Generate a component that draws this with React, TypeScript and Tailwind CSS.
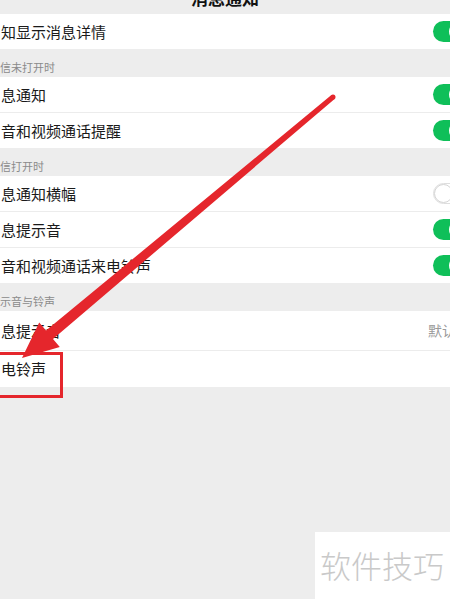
const font = { fontFamily: '"Noto Sans CJK SC", "Noto Sans", sans-serif' };

type Row = { label: string; toggle?: boolean; value?: string; h?: string };

const groups: { title?: string; rows: Row[] }[] = [
  { rows: [{ label: "知显示消息详情", toggle: true, h: "h-[35px]" }] },
  {
    title: "信未打开时",
    rows: [
      { label: "息通知", toggle: true, h: "h-[35px]" },
      { label: "音和视频通话提醒", toggle: true },
    ],
  },
  {
    title: "信打开时",
    rows: [
      { label: "息通知横幅", toggle: false, h: "h-[35px]" },
      { label: "息提示音", toggle: true },
      { label: "音和视频通话来电铃声", toggle: true },
    ],
  },
  {
    title: "示音与铃声",
    rows: [
      { label: "息提示音", value: "默认", h: "h-[39px]" },
      { label: "电铃声", h: "h-[37px]" },
    ],
  },
];

function Toggle({ on }: { on: boolean }) {
  if (!on) {
    return (
      <div className="relative h-[21px] w-[36px] shrink-0 rounded-full border border-[#dedede] bg-white">
        <div className="absolute left-0 top-0 h-[19px] w-[19px] rounded-full border border-[#d4d4d4] bg-white" />
      </div>
    );
  }
  return (
    <div className="relative h-[21px] w-[36px] shrink-0 rounded-full bg-[#0fbf59]">
      <div className="absolute right-[1px] top-[1px] h-[19px] w-[19px] rounded-full bg-white" />
    </div>
  );
}

export default function App() {
  return (
    <div className="relative h-[599px] w-[450px] overflow-hidden bg-[#ededed]" style={font}>
      {/* 标题栏 */}
      <div className="-mt-[18px] flex h-[32px] items-center justify-center">
        <span className="text-[17px] font-bold text-[#111]">消息通知</span>
      </div>

      {groups.map((g, gi) => (
        <div key={gi}>
          {g.title && (
            <div className="flex h-[28px] items-end pb-[4px] text-[11px] leading-none text-[#8a8a8a]">
              {g.title}
            </div>
          )}
          <div className="bg-white">
            {g.rows.map((r, ri) => (
              <div
                key={ri}
                className={`flex items-center justify-between pl-[1px] ${r.h ?? "h-[36px]"} ${
                  ri > 0 ? "border-t border-[#ececec]" : ""
                }`}
              >
                <span className="pt-[1px] text-[15px] text-[#1a1a1a]">{r.label}</span>
                {r.toggle !== undefined && (
                  <div className="mr-[-19px]">
                    <Toggle on={r.toggle} />
                  </div>
                )}
                {r.value && <span className="mr-[-6px] text-[14px] text-[#9a9a9a]">{r.value}</span>}
              </div>
            ))}
          </div>
        </div>
      ))}

      {/* 水印 */}
      <div className="absolute bottom-0 right-0 flex h-[67px] w-[135px] items-center bg-white pl-[5px]">
        <span className="text-[31px] font-light text-[#c9c9c9]">软件技巧</span>
      </div>

      {/* 红色箭头与框 */}
      <svg className="pointer-events-none absolute inset-0" width="450" height="599" viewBox="0 0 450 599">
        <polygon
          points="331.4,95.1 334.6,98.9 53,339 59.8,347 22,358 39.2,322.6 46,330.6"
          fill="#e5262c"
        />
        <circle cx="333" cy="97" r="2.5" fill="#e5262c" />
        <rect x="-10" y="353.5" width="71.5" height="43" fill="none" stroke="#e5262c" strokeWidth="3" />
      </svg>
    </div>
  );
}
